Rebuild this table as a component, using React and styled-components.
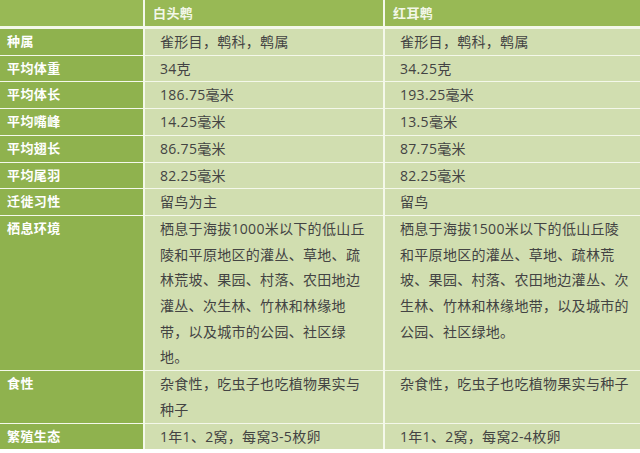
import React from "react";
import styled, { createGlobalStyle } from "styled-components";

const GlobalStyle = createGlobalStyle`
  html, body {
    margin: 0;
    padding: 0;
    background: #ffffff;
  }
  body {
    font-family: "Open Sans", "Noto Sans CJK SC", sans-serif;
  }
`;

const Frame = styled.div`
  width: 640px;
  height: 453px;
  overflow: hidden;
  background: #ffffff;
`;

const Table = styled.div`
  display: grid;
  grid-template-columns: 143px 238px 262px;
  column-gap: 2px;
  row-gap: 1px;
  background: #f4f8ea;
  width: 647px;
`;

const HeadCell = styled.div`
  height: 26px;
  line-height: 26px;
  margin-bottom: 2px;
  padding: 0 8px;
  background: #98b955;
  color: #f3f7e8;
  font-size: 13px;
  font-weight: bold;
  letter-spacing: 0.4px;
`;

const Label = styled.div`
  padding: 0 7px;
  background: #8fb24e;
  color: #ffffff;
  font-size: 13px;
  font-weight: bold;
  line-height: 25.7px;
  letter-spacing: 0.4px;
`;

const Cell = styled.div`
  padding: 0 15px;
  background: #d1deb0;
  color: #434343;
  font-size: 14px;
  line-height: 25.7px;
  letter-spacing: 0.3px;
`;

const rows = [
  ["种属", "雀形目，鹎科，鹎属", "雀形目，鹎科，鹎属"],
  ["平均体重", "34克", "34.25克"],
  ["平均体长", "186.75毫米", "193.25毫米"],
  ["平均嘴峰", "14.25毫米", "13.5毫米"],
  ["平均翅长", "86.75毫米", "87.75毫米"],
  ["平均尾羽", "82.25毫米", "82.25毫米"],
  ["迁徙习性", "留鸟为主", "留鸟"],
  [
    "栖息环境",
    "栖息于海拔1000米以下的低山丘陵和平原地区的灌丛、草地、疏林荒坡、果园、村落、农田地边灌丛、次生林、竹林和林缘地带，以及城市的公园、社区绿地。",
    "栖息于海拔1500米以下的低山丘陵和平原地区的灌丛、草地、疏林荒坡、果园、村落、农田地边灌丛、次生林、竹林和林缘地带，以及城市的公园、社区绿地。",
  ],
  ["食性", "杂食性，吃虫子也吃植物果实与种子", "杂食性，吃虫子也吃植物果实与种子"],
  ["繁殖生态", "1年1、2窝，每窝3-5枚卵", "1年1、2窝，每窝2-4枚卵"],
];

export default function App() {
  return (
    <>
      <GlobalStyle />
      <Frame>
        <Table>
          <HeadCell />
          <HeadCell>白头鹎</HeadCell>
          <HeadCell>红耳鹎</HeadCell>
          {rows.map(([label, a, b]) => (
            <React.Fragment key={label}>
              <Label>{label}</Label>
              <Cell>{a}</Cell>
              <Cell>{b}</Cell>
            </React.Fragment>
          ))}
        </Table>
      </Frame>
    </>
  );
}
